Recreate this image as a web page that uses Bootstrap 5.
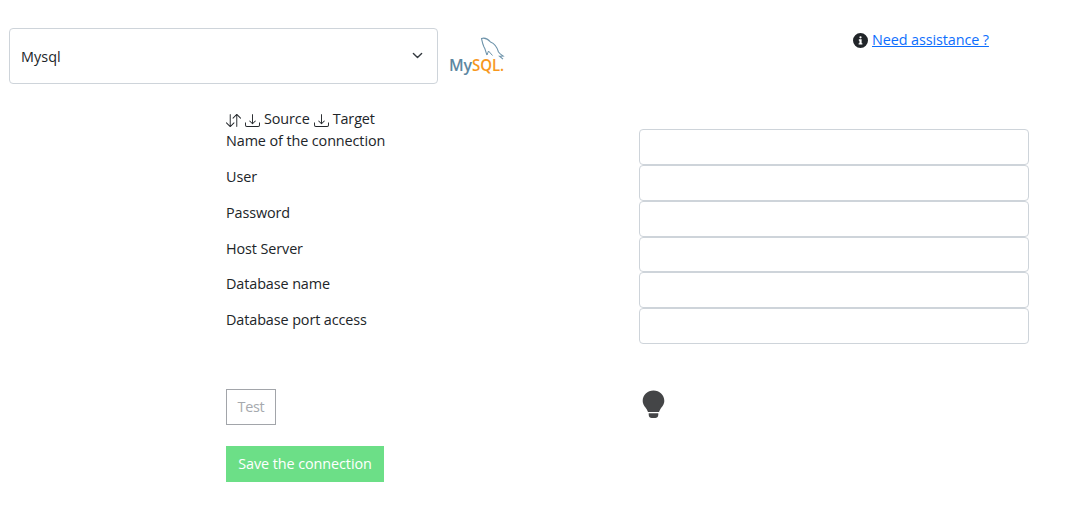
<!DOCTYPE html>
<html lang="en">
<head>
<meta charset="utf-8">
<meta name="viewport" content="width=device-width, initial-scale=1">
<title>Connection</title>
<link href="https://cdn.jsdelivr.net/npm/bootstrap@5.3.0/dist/css/bootstrap.min.css" rel="stylesheet">
<style>
body{font-family:"Open Sans","Noto Sans",sans-serif;font-size:14.4px;line-height:22.4px;letter-spacing:-.1px;color:#212529;overflow:hidden}
.top-bar{padding:28px 0 0 9px}
.solution{width:429px;height:56px;padding:2px 36px 0 11px;font-size:inherit;letter-spacing:.05px;border-color:#ced4da;border-radius:4px;background-size:15px 11px;background-position:right 12px top 21px}
.brand-logo{width:60px;height:46px;margin:8px 0 0 10px}
.help{margin:1px 0 0 345px}
.help a{color:#0d6efd}
.help svg{margin-right:4px}
.fields{margin:24px 0 0 226px;width:803px}
.direction{height:21px}
.direction span{padding-top:2px}
.label-col{width:413px}
label.label-col{padding-top:1px;letter-spacing:-.1px}
.field-row{height:35.85px}
.field-row .form-control{height:100%;border-color:#ced4da;border-radius:4px}
.actions{margin-top:45px}
.btn{font-size:inherit;line-height:22px;padding:6px 0;border-radius:0;height:36px;white-space:nowrap}
.btn-test,.btn-test:disabled{color:#a6a9ae;border-color:#a2a5aa;opacity:1;width:50px;letter-spacing:-.3px}
.btn-save,.btn-save:disabled{color:#fff;background:#6cdf87;border-color:#6cdf87;opacity:1;margin-top:21px;width:158px;letter-spacing:-.08px}
</style>
</head>
<body>
<header class="top-bar d-flex align-items-start">
  <select class="form-select solution" aria-label="Solution"><option>Mysql</option></select>
  <svg class="brand-logo" viewBox="0 0 60 46">
    <path d="M39 19C37.500 16 37.500 13 36 11 34.500 8 34 5 33.500 2.500c3-1 6 0 9 3.500 4 1.500 6.500 5 8 10 1.500 2 3 3 4.500 4l-3.500.2 3.500 3" fill="none" stroke="#6d93aa" stroke-width="1.1"/>
    <path d="M39 19l1.500-4 4 4.500" fill="none" stroke="#6d93aa" stroke-width="1"/>
    <text x="1" y="35" font-family="Open Sans" font-size="17" font-weight="600" textLength="23" lengthAdjust="spacingAndGlyphs" fill="#5d87a1">My</text>
    <text x="24" y="35" font-family="Open Sans" font-size="17" font-weight="600" textLength="32" lengthAdjust="spacingAndGlyphs" fill="#f7981d">SQL.</text>
  </svg>
  <div class="help d-flex align-items-center">
    <svg width="15" height="15" viewBox="0 0 16 16" fill="#212529"><path d="M8 16A8 8 0 1 0 8 0a8 8 0 0 0 0 16zM6.2 6.7h3v4.1h.8v1.500H6v-1.500h.9V8.2h-.7zM8 3.400a1.200 1.200 0 1 1 0 2.400 1.200 1.200 0 0 1 0-2.400z" fill-rule="evenodd"/></svg>
    <a href="#">Need assistance ?</a>
  </div>
</header>
<main class="fields">
  <div class="direction d-flex align-items-center">
    <svg width="15" height="15" viewBox="0 0 16 16" fill="#212529" class="mt-1"><path fill-rule="evenodd" d="M11.5 15a.5.5 0 0 0 .5-.5V2.707l3.146 3.147a.5.5 0 0 0 .708-.708l-4-4a.5.5 0 0 0-.708 0l-4 4a.5.5 0 1 0 .708.708L11 2.707V14.5a.5.5 0 0 0 .5.5zm-7-14a.5.5 0 0 1 .5.5v11.793l3.146-3.147a.5.5 0 0 1 .708.708l-4 4a.5.5 0 0 1-.708 0l-4-4a.5.5 0 0 1 .708-.708L4 13.293V1.5a.5.5 0 0 1 .5-.5z"/></svg>
    <svg width="15" height="15" viewBox="0 0 16 16" fill="#212529" class="mt-1 ms-1"><path d="M.5 9.9a.5.5 0 0 1 .5.5v2.5a1 1 0 0 0 1 1h12a1 1 0 0 0 1-1v-2.5a.5.5 0 0 1 1 0v2.5a2 2 0 0 1-2 2H2a2 2 0 0 1-2-2v-2.5a.5.5 0 0 1 .5-.5z"/><path d="M7.646 11.854a.5.5 0 0 0 .708 0l3-3a.5.5 0 0 0-.708-.708L8.5 10.293V1.5a.5.5 0 0 0-1 0v8.793L5.354 8.146a.5.5 0 1 0-.708.708l3 3z"/></svg>
    <span class="ms-1">Source</span>
    <svg width="15" height="15" viewBox="0 0 16 16" fill="#212529" class="mt-1 ms-1"><path d="M.5 9.9a.5.5 0 0 1 .5.5v2.5a1 1 0 0 0 1 1h12a1 1 0 0 0 1-1v-2.5a.5.5 0 0 1 1 0v2.5a2 2 0 0 1-2 2H2a2 2 0 0 1-2-2v-2.5a.5.5 0 0 1 .5-.5z"/><path d="M7.646 11.854a.5.5 0 0 0 .708 0l3-3a.5.5 0 0 0-.708-.708L8.5 10.293V1.5a.5.5 0 0 0-1 0v8.793L5.354 8.146a.5.5 0 1 0-.708.708l3 3z"/></svg>
    <span class="ms-1">Target</span>
  </div>
  <div class="d-flex field-row"><label class="label-col" for="f1">Name of the connection</label><div class="flex-grow-1"><input id="f1" class="form-control"></div></div>
  <div class="d-flex field-row"><label class="label-col" for="f2">User</label><div class="flex-grow-1"><input id="f2" class="form-control"></div></div>
  <div class="d-flex field-row"><label class="label-col" for="f3">Password</label><div class="flex-grow-1"><input id="f3" type="password" class="form-control"></div></div>
  <div class="d-flex field-row"><label class="label-col" for="f4">Host Server</label><div class="flex-grow-1"><input id="f4" class="form-control"></div></div>
  <div class="d-flex field-row"><label class="label-col" for="f5">Database name</label><div class="flex-grow-1"><input id="f5" class="form-control"></div></div>
  <div class="d-flex field-row"><label class="label-col" for="f6">Database port access</label><div class="flex-grow-1"><input id="f6" class="form-control"></div></div>
  <div class="actions d-flex">
    <div class="label-col"><button class="btn btn-outline-secondary btn-test" disabled>Test</button></div>
    <svg width="28" height="30" viewBox="0 0 28 30"><path fill="#444547" d="M14.500 1.500C8.500 1.500 3.700 6 3.700 11.800c0 4 2.300 5.700 4 8.500.6 1 .9 2 1.300 2.700h11c.4-.7.700-1.700 1.300-2.700 1.700-2.800 4-4.500 4-8.500C25.300 6 20.500 1.500 14.500 1.500zM9.700 24.200h9.600v1.500c0 2.300-1.500 3.300-3 3.300h-3.600c-1.500 0-3-1-3-3.300z"/></svg>
  </div>
  <button class="btn btn-save d-block" disabled>Save the connection</button>
</main>
<script src="https://cdn.jsdelivr.net/npm/bootstrap@5.3.0/dist/js/bootstrap.bundle.min.js"></script>
</body>
</html>
